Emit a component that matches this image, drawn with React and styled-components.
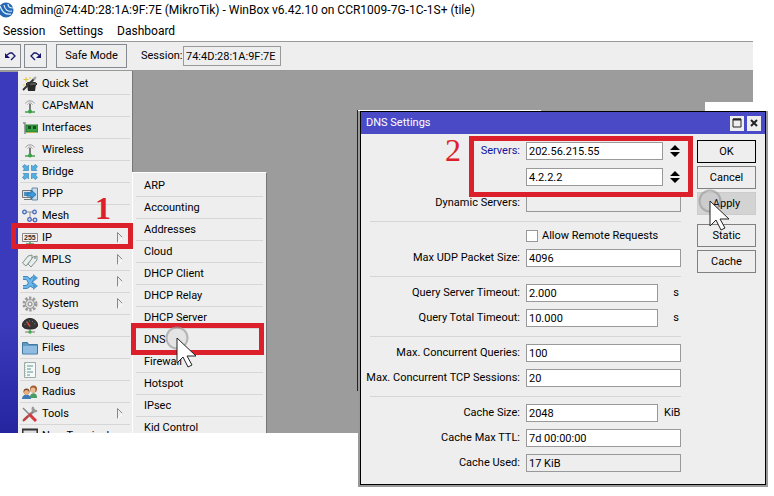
import React from "react";
import styled, { createGlobalStyle, css } from "styled-components";

const ui = 'Roboto, "Liberation Sans", sans-serif';
const c = { face: "#eee", line: "#d6d6d6", edge: "#999", ink: "#000", red: "#dc202b", navy: "#1414a0" };

const GlobalStyle = createGlobalStyle`
  * { box-sizing: border-box; }
  body { margin: 0; background: #fff; color: ${c.ink}; font: 11px/16px ${ui}; }
  button, input { font: inherit; color: inherit; }
  ul { list-style: none; margin: 0; padding: 0; }
`;

const Screen = styled.main`
  position: relative;
  height: 100vh;
  min-height: 496px;
  overflow: hidden;
`;

const AppWindow = styled.section`
  display: flex;
  flex-direction: column;
  height: calc(100% - 63px);
  margin-right: 21px;
`;

const TitleBar = styled.header`
  display: flex;
  align-items: center;
  gap: 5px;
  height: 20px;
`;

const WindowTitle = styled.h1`
  margin: 0;
  font: 400 12px/18px Roboto, sans-serif;
  white-space: nowrap;
`;

const MenuBar = styled.nav`
  display: flex;
  align-items: center;
  gap: 14px;
  height: 21px;
  padding-left: 3px;
`;

const MenuButton = styled.button`
  border: 0;
  padding: 0;
  background: none;
  font: 12px/18px Roboto, sans-serif;
`;

const Toolbar = styled.div`
  display: flex;
  align-items: center;
  height: 30px;
  background: ${c.face};
  border-top: 1px solid ${c.edge};
  border-bottom: 1px solid ${c.edge};
`;

const ToolButton = styled.button`
  display: flex;
  align-items: center;
  justify-content: center;
  width: ${(p) => (p.$wide ? 71 : 23)}px;
  height: 24px;
  margin-right: ${(p) => p.$after || 3}px;
  padding: 0;
  background: ${c.face};
  border: 1px solid #858a90;
  &:first-child { width: 21px; border-left: 0; }
`;

const ToolLabel = styled.label`
  width: 42px;
  white-space: nowrap;
`;

const Field = styled.input`
  min-width: 0;
  width: 100%;
  height: 18px;
  padding: 0 2px;
  border: 1px solid ${c.edge};
  border-radius: 0;
  background: ${(p) => (p.readOnly ? c.face : "#fff")};
  outline: none;
`;

const SessionField = styled(Field)`
  width: 98px;
  height: 20px;
`;

const Workspace = styled.div`
  position: relative;
  display: flex;
  flex: 1;
  min-height: 0;
  background: #9c9c9c;
`;

const Clip = styled.div`
  display: flex;
  overflow: hidden;
`;

const BlueRail = styled.div`
  width: 18px;
  margin-top: 1px;
  background: linear-gradient(#3b3abc 70%, #2525a0);
`;

const SideMenu = styled.ul`
  width: 115px;
  padding: 2px;
  background: ${c.face};
  border-right: 1px solid #777;
`;

const MenuItem = styled.li`
  position: relative;
  height: 22px;
  border-bottom: 1px solid ${c.line};
`;

const ItemButton = styled.button`
  display: flex;
  align-items: center;
  gap: 4px;
  width: 100%;
  height: 100%;
  padding: 0 7px 0 2px;
  border: 0;
  background: none;
  text-align: left;
  white-space: nowrap;
  ${(p) => p.$plain && css`padding-left: 8px;`}
  > svg:last-child:not(:first-child) { margin-left: auto; }
`;

const SubMenu = styled.ul`
  position: absolute;
  top: 101px;
  left: 132px;
  bottom: 0;
  width: 135px;
  padding: 2px 3px;
  overflow: hidden;
  background: ${c.face};
  border: solid #fff;
  border-width: 1px 0 0 1px;
  border-right: 1px solid #777;
`;

const places = {
  ip: "top: -4px; bottom: -1px; left: -9px; right: -3px;",
  dns: "left: 131px; top: 252px; width: 133px; height: 32px;",
  servers: "left: 109px; top: 25px; width: 224px; height: 61px;",
};

const RedFrame = styled.span`
  position: absolute;
  z-index: 3;
  border: 5px solid ${c.red};
  pointer-events: none;
  ${(p) => places[p.$place]}
`;

const StepNumber = styled.span`
  position: absolute;
  z-index: 3;
  left: ${(p) => p.$x}px;
  top: ${(p) => p.$y}px;
  color: ${c.red};
  font: ${(p) => (p.$bold ? 700 : 400)} 32px/32px "Liberation Serif", serif;
`;

const PointerBox = styled.svg`
  position: absolute;
  z-index: 4;
  left: ${(p) => p.$x}px;
  top: ${(p) => p.$y}px;
  pointer-events: none;
`;

const PaleStrip = styled.div`
  position: absolute;
  right: 0;
  top: 31px;
  width: 48px;
  height: 9px;
  background: #fff;
`;

const BackWindow = styled.div`
  position: absolute;
  left: 357px;
  top: 110px;
  width: 184px;
  height: 281px;
  background: #fff;
  border-left: 1px solid #222;
`;

const Dialog = styled.section`
  position: absolute;
  left: 358px;
  top: 111px;
  width: 410px;
  border: solid #999;
  border-width: 0 2px 2px;
`;

const DialogFrame = styled.div`
  border: 1px solid #000;
  background: ${c.face};
`;

const DialogBar = styled.header`
  display: flex;
  align-items: center;
  gap: 3px;
  height: 22px;
  padding: 0 4px 0 5px;
  background: #4a4ac6;
  color: #fff;
`;

const DialogTitle = styled.h2`
  flex: 1;
  margin: 0;
  font: inherit;
`;

const BarButton = styled.button`
  display: grid;
  place-items: center;
  width: 14px;
  height: 15px;
  padding: 0;
  border: 0;
  background: ${c.face};
`;

const DialogBody = styled.form`
  display: flex;
  gap: 16px;
  padding: 8px 9px 12px;
`;

const FormColumn = styled.div`
  flex: 1;
`;

const Group = styled.div`
  display: grid;
  gap: ${(p) => p.$gap || 7}px;
  & + & {
    margin-top: 9px;
    padding-top: 7px;
    border-top: 1px solid ${c.line};
  }
`;

const FormRow = styled.div`
  display: grid;
  grid-template-columns: 150px 1fr ${(p) => p.$tail || ""};
  align-items: center;
  column-gap: 6px;
  height: 18px;
`;

const ServerRow = styled(FormRow)`
  grid-template-columns: 150px 1fr 12px;
`;

const FormLabel = styled.label`
  justify-self: end;
  white-space: nowrap;
  color: ${(p) => (p.$blue ? c.navy : c.ink)};
`;

const Unit = styled.span`
  padding-right: 2px;
  text-align: right;
`;

const CheckRow = styled.div`
  display: flex;
  align-items: center;
  gap: 4px;
  height: 13px;
  padding-left: 156px;
  white-space: nowrap;
`;

const CheckBox = styled.input`
  appearance: none;
  flex: none;
  width: 12px;
  height: 12px;
  margin: 0;
  border: 1px solid ${c.edge};
  background: #fff;
  &:checked { background: ${c.navy}; }
`;

const SpinButton = styled.button`
  width: 12px;
  height: 16px;
  padding: 0;
  border: 0;
  background: none;
  display: grid;
  place-items: center;
`;

const ButtonColumn = styled.div`
  display: flex;
  flex-direction: column;
  gap: 3px;
  width: 59px;
  margin-top: -2px;
`;

const PushButton = styled.button`
  height: 23px;
  padding: 0;
  background: ${(p) => (p.$pressed ? "#d3d3d3" : c.face)};
  border: 1px solid ${(p) => (p.$main ? "#000" : p.$pressed ? "#ccc" : "#808080")};
  margin-bottom: ${(p) => (p.$pressed ? 6 : 0)}px;
`;

const Icon = ({ children, w = 16, h = 16 }) => (
  <svg width={w} height={h} viewBox={`0 0 ${w} ${h}`} fill="none" aria-hidden="true">{children}</svg>
);

const antenna = (
  <>
    <path d="M3.500 5.500C5 2 11 2 12.500 5.500M5.500 6.500C6.500 4.500 9.500 4.500 10.500 6.500" stroke="#999" />
    <path d="M8 6v7" stroke="#555" strokeWidth="1.500" />
    <path d="M3 14h10" stroke="#4b9b53" strokeWidth="1.500" />
    <circle cx="8" cy="13.500" r="2" fill="#36a344" />
  </>
);

const icons = {
  wand: (
    <>
      <path d="M5 8h9l-1 7H6z" fill="#292929" />
      <ellipse cx="9.500" cy="8" rx="5.500" ry="1.800" fill="#555" stroke="#222" />
      <path d="M1 14L13 2" stroke="#333" strokeWidth="2" />
      <path d="M11.500 3.500L14 1" stroke="#aaa" strokeWidth="2" />
      <path d="M4 1v5M1.500 3.500h5M8 1v2M2 8v2" stroke="#dfc23f" />
    </>
  ),
  antenna,
  card: (
    <>
      <path d="M1 3h2v11" stroke="#888" strokeWidth="1.500" />
      <path d="M4 5h12v7H4z" fill="#35a343" stroke="#267c32" />
      <path d="M6 6h3v3H6zM11 6h3v3h-3z" fill="#164f20" />
      <path d="M6 12.500h8" stroke="#c8b54b" strokeDasharray="1 1" />
    </>
  ),
  bridge: (
    <g fill="#55aee0" stroke="#2b7db2" strokeWidth=".6">
      <path d="M.5 2.500l2-2 2.500 2L6.500 1v5.500H1L2.500 5z" />
      <path d="M15.500 2.500l-2-2-2.500 2L9.500 1v5.500H15L13.500 5z" />
      <path d="M.5 13.500l2 2 2.500-2L6.500 15V9.500H1L2.500 11z" />
      <path d="M15.500 13.500l-2 2-2.500-2L9.500 15V9.500H15L13.500 11z" />
    </g>
  ),
  ppp: (
    <>
      <path d="M.5 4.500h10v7H.5zM2 13.500h8" stroke="#777" fill="#d8e2ea" />
      <path d="M2 6h6v4H2z" fill="#5292c4" />
      <path d="M10 2h5.500v12H10z" fill="#c8dbe9" stroke="#6b8aa3" />
      <path d="M5 7h4V4l5 4.500L9 13v-3H5z" fill="#3c9bdc" stroke="#2573a9" />
    </>
  ),
  mesh: (
    <>
      <path d="M3 4h5v8h4M8 4h4" stroke="#888" />
      <g fill="#d6e5ff" stroke="#4868b8" strokeWidth="1.300">
        <circle cx="2.500" cy="4" r="1.800" /><circle cx="12.500" cy="4" r="1.800" />
        <circle cx="7.500" cy="11.500" r="1.800" /><circle cx="13" cy="12" r="1.800" />
      </g>
    </>
  ),
  ip: (
    <>
      <path d="M.5 3.500h15v8H.5z" fill="#f2f2f2" stroke="#888" />
      <text x="2" y="10" fill="#333" fontSize="7" fontWeight="700" fontFamily="Liberation Sans">255</text>
      <path d="M8 12v2M4 14h8" stroke="#52985c" strokeWidth="1.500" />
    </>
  ),
  tags: (
    <g fill="#e8eeeb" stroke="#82908c">
      <path d="M.5 11L6 4l4-1v4l-6 7z" />
      <path d="M6 12l5-7 4-1v4l-6 7z" /><circle cx="13" cy="6" r=".6" />
    </g>
  ),
  routing: (
    <>
      <path d="M1 4h3c4 0 3 8 8 8" stroke="#2e78b7" strokeWidth="4" />
      <path d="M1 13h3c5 0 4-9 8-9" stroke="#2e78b7" strokeWidth="4" />
      <path d="M1 4h3c4 0 3 8 8 8M1 13h3c5 0 4-9 8-9" stroke="#6eb9e9" strokeWidth="2.500" />
      <path d="M11 0l5 4-5 4zM11 8l5 4-5 4z" fill="#4d9dd3" />
    </>
  ),
  gear: (
    <>
      <circle cx="8" cy="8" r="6" stroke="#999" strokeWidth="3" strokeDasharray="2.300 1.500" />
      <circle cx="8" cy="8" r="4.500" fill="#ddd" stroke="#999" />
      <circle cx="8" cy="8" r="2" fill="#eee" stroke="#888" />
    </>
  ),
  gauge: (
    <>
      <path d="M.5 7a7.500 6.500 0 0115 0c0 3-3 4-7.500 4S.5 10 .5 7z" fill="#353535" stroke="#222" />
      <path d="M3 7a5 4 0 0110 0" stroke="#999" strokeDasharray="1 2" />
      <path d="M8 8.500L5 4" stroke="#e44545" strokeWidth="1.500" />
      <path d="M8 11v3M3 14h10" stroke="#777" /><circle cx="8" cy="14" r="1.700" fill="#3ead4a" />
    </>
  ),
  folder: (
    <>
      <path d="M.5 13V2.500h5l1 2h9V14H.5z" fill="#5d9bc7" stroke="#46779d" />
      <path d="M1 6h14v7.500H1z" fill="#8fbce0" />
    </>
  ),
  log: (
    <>
      <path d="M2.500.5h11v15h-11z" fill="#f5faf8" stroke="#9caca8" />
      <path d="M5 4h6M5 7h4M5 10h6M5 13h3" stroke="#5c9292" />
      <path d="M3.500 1v14" stroke="#c5d3d0" strokeDasharray="1 1" />
    </>
  ),
  people: (
    <>
      <path d="M8 13c0-5 7-5 7 0v1H8z" fill="#4b9b65" />
      <circle cx="11.500" cy="5" r="3.500" fill="#a15d32" /><circle cx="11" cy="6" r="2.500" fill="#eabd93" />
      <path d="M0 15c0-6 9-6 9 0z" fill="#3f7bb4" />
      <circle cx="4.500" cy="7.500" r="3" fill="#7a4727" /><circle cx="4.500" cy="8.500" r="2.500" fill="#e6b183" />
    </>
  ),
  tools: (
    <>
      <path d="M2 14L13 4" stroke="#888" strokeWidth="2.500" />
      <path d="M11 1c-2 3 1 6 4 4M11 1l1 3 3 1" stroke="#999" strokeWidth="1.500" />
      <path d="M1 2l7 7" stroke="#888" strokeWidth="1.500" />
      <path d="M7 8l7 7" stroke="#d4383b" strokeWidth="3" />
      <path d="M1 15l5-5" stroke="#c93a3a" strokeWidth="2" />
    </>
  ),
  terminal: <path d="M.5 1.500h15v12H.5z" fill="#ddd" stroke="#333" strokeWidth="2" />,
};

const sideItems = [
  ["Quick Set", "wand"], ["CAPsMAN", "antenna"], ["Interfaces", "card"], ["Wireless", "antenna"],
  ["Bridge", "bridge"], ["PPP", "ppp"], ["Mesh", "mesh"], ["IP", "ip", true], ["MPLS", "tags", true],
  ["Routing", "routing", true], ["System", "gear", true], ["Queues", "gauge"], ["Files", "folder"],
  ["Log", "log"], ["Radius", "people"], ["Tools", "tools", true], ["New Terminal", "terminal"],
];

const ipItems = [
  "ARP", "Accounting", "Addresses", "Cloud", "DHCP Client", "DHCP Relay",
  "DHCP Server", "DNS", "Firewall", "Hotspot", "IPsec", "Kid Control",
];

const Pointer = ({ x, y }) => (
  <PointerBox $x={x} $y={y} width="34" height="44" viewBox="0 0 34 44" fill="none" aria-hidden="true">
    <circle cx="12" cy="12" r="10.500" fill="#999" fillOpacity=".12" stroke="#999" strokeOpacity=".65" strokeWidth="2" />
    <path d="M12 12v25l6-6 5 10 4-2-5-9h9z" fill="#fff" stroke="#222" />
  </PointerBox>
);

const FormField = ({ id, label, value, unit, readOnly }) => (
  <FormRow $tail={unit ? "17px" : ""}>
    <FormLabel htmlFor={id}>{label}</FormLabel>
    <Field id={id} defaultValue={value} readOnly={readOnly} />
    {unit && <Unit>{unit}</Unit>}
  </FormRow>
);

const Spinner = ({ label }) => (
  <SpinButton type="button" aria-label={label}>
    <Icon w={10} h={12}><path d="M5 0l5 5H0zM0 7h10l-5 5z" fill="#000" /></Icon>
  </SpinButton>
);

const DnsDialog = () => (
  <Dialog role="dialog" aria-labelledby="dns-title">
    <DialogFrame>
      <DialogBar>
        <DialogTitle id="dns-title">DNS Settings</DialogTitle>
        <BarButton type="button" aria-label="Maximize">
          <Icon w={10} h={10}><path d="M1 1h8v8H1z" stroke="#222" /><path d="M1 1.500h8" stroke="#222" strokeWidth="2" /></Icon>
        </BarButton>
        <BarButton type="button" aria-label="Close">
          <Icon w={10} h={10}><path d="M2 2l6 6M8 2L2 8" stroke="#222" strokeWidth="2" /></Icon>
        </BarButton>
      </DialogBar>
      <DialogBody onSubmit={(e) => e.preventDefault()}>
        <FormColumn>
          <Group $gap={8}>
            <ServerRow>
              <FormLabel $blue htmlFor="server1">Servers:</FormLabel>
              <Field id="server1" defaultValue="202.56.215.55" />
              <Spinner label="Move first server" />
            </ServerRow>
            <ServerRow>
              <span />
              <Field aria-label="Second server" defaultValue="4.2.2.2" />
              <Spinner label="Move second server" />
            </ServerRow>
            <FormField id="dynamic" label="Dynamic Servers:" value="" readOnly />
          </Group>
          <Group>
            <CheckRow>
              <CheckBox id="remote" type="checkbox" />
              <label htmlFor="remote">Allow Remote Requests</label>
            </CheckRow>
            <FormField id="udp" label="Max UDP Packet Size:" value="4096" />
          </Group>
          <Group>
            <FormField id="qst" label="Query Server Timeout:" value="2.000" unit="s" />
            <FormField id="qtt" label="Query Total Timeout:" value="10.000" unit="s" />
          </Group>
          <Group>
            <FormField id="mcq" label="Max. Concurrent Queries:" value="100" />
            <FormField id="mct" label="Max. Concurrent TCP Sessions:" value="20" />
          </Group>
          <Group>
            <FormField id="size" label="Cache Size:" value="2048" unit="KiB" />
            <FormField id="ttl" label="Cache Max TTL:" value="7d 00:00:00" />
            <FormField id="used" label="Cache Used:" value="17 KiB" readOnly />
          </Group>
        </FormColumn>
        <ButtonColumn>
          <PushButton $main>OK</PushButton>
          <PushButton type="button">Cancel</PushButton>
          <PushButton type="button" $pressed>Apply</PushButton>
          <PushButton type="button">Static</PushButton>
          <PushButton type="button">Cache</PushButton>
        </ButtonColumn>
      </DialogBody>
    </DialogFrame>
    <RedFrame $place="servers" />
    <StepNumber $x={85} $y={23}>2</StepNumber>
    <Pointer x={338} y={78} />
  </Dialog>
);

export default function App() {
  return (
    <Screen>
      <GlobalStyle />
      <AppWindow>
        <TitleBar>
          <Icon w={15} h={18}>
            <circle cx="6" cy="9" r="7.500" fill="#2668b3" />
            <path d="M0 5c2 6 6 9 11 8M4 4c1 5 4 7 8 6M8 3c0 3 2 4 5 4" stroke="#d8ecff" strokeWidth="1.200" />
          </Icon>
          <WindowTitle>admin@74:4D:28:1A:9F:7E (MikroTik) - WinBox v6.42.10 on CCR1009-7G-1C-1S+ (tile)</WindowTitle>
        </TitleBar>
        <MenuBar>
          <MenuButton>Session</MenuButton>
          <MenuButton>Settings</MenuButton>
          <MenuButton>Dashboard</MenuButton>
        </MenuBar>
        <Toolbar>
          <ToolButton aria-label="Undo">
            <Icon w={14} h={12}><path d="M4 5l3-2h2l3 3-4 4" stroke="#151570" strokeWidth="1.300" /><path d="M2 3v5h5z" fill="#151570" /></Icon>
          </ToolButton>
          <ToolButton aria-label="Redo" $after={9}>
            <Icon w={14} h={12}><path d="M10 5L7 3H5L2 6l4 4" stroke="#151570" strokeWidth="1.300" /><path d="M12 3v5H7z" fill="#151570" /></Icon>
          </ToolButton>
          <ToolButton $wide $after={14}>Safe Mode</ToolButton>
          <ToolLabel htmlFor="session">Session:</ToolLabel>
          <SessionField id="session" readOnly value="74:4D:28:1A:9F:7E" />
        </Toolbar>
        <Workspace>
          <Clip>
            <BlueRail />
            <SideMenu>
              {sideItems.map(([name, icon, more]) => (
                <MenuItem key={name}>
                  <ItemButton>
                    <Icon>{icons[icon]}</Icon>
                    {name}
                    {more && <Icon w={6} h={12}><path d="M.5 11V.5L5.500 5.500" stroke="#888" /><path d="M5.500 5.500L.5 11" stroke="#fff" /></Icon>}
                  </ItemButton>
                  {name === "IP" && <RedFrame $place="ip" />}
                </MenuItem>
              ))}
            </SideMenu>
          </Clip>
          <SubMenu>
            {ipItems.map((name) => (
              <MenuItem key={name}><ItemButton $plain>{name}</ItemButton></MenuItem>
            ))}
          </SubMenu>
          <RedFrame $place="dns" />
          <StepNumber $bold $x={95} $y={121}>1</StepNumber>
          <Pointer x={165} y={255} />
          <PaleStrip />
        </Workspace>
      </AppWindow>
      <BackWindow />
      <DnsDialog />
    </Screen>
  );
}
